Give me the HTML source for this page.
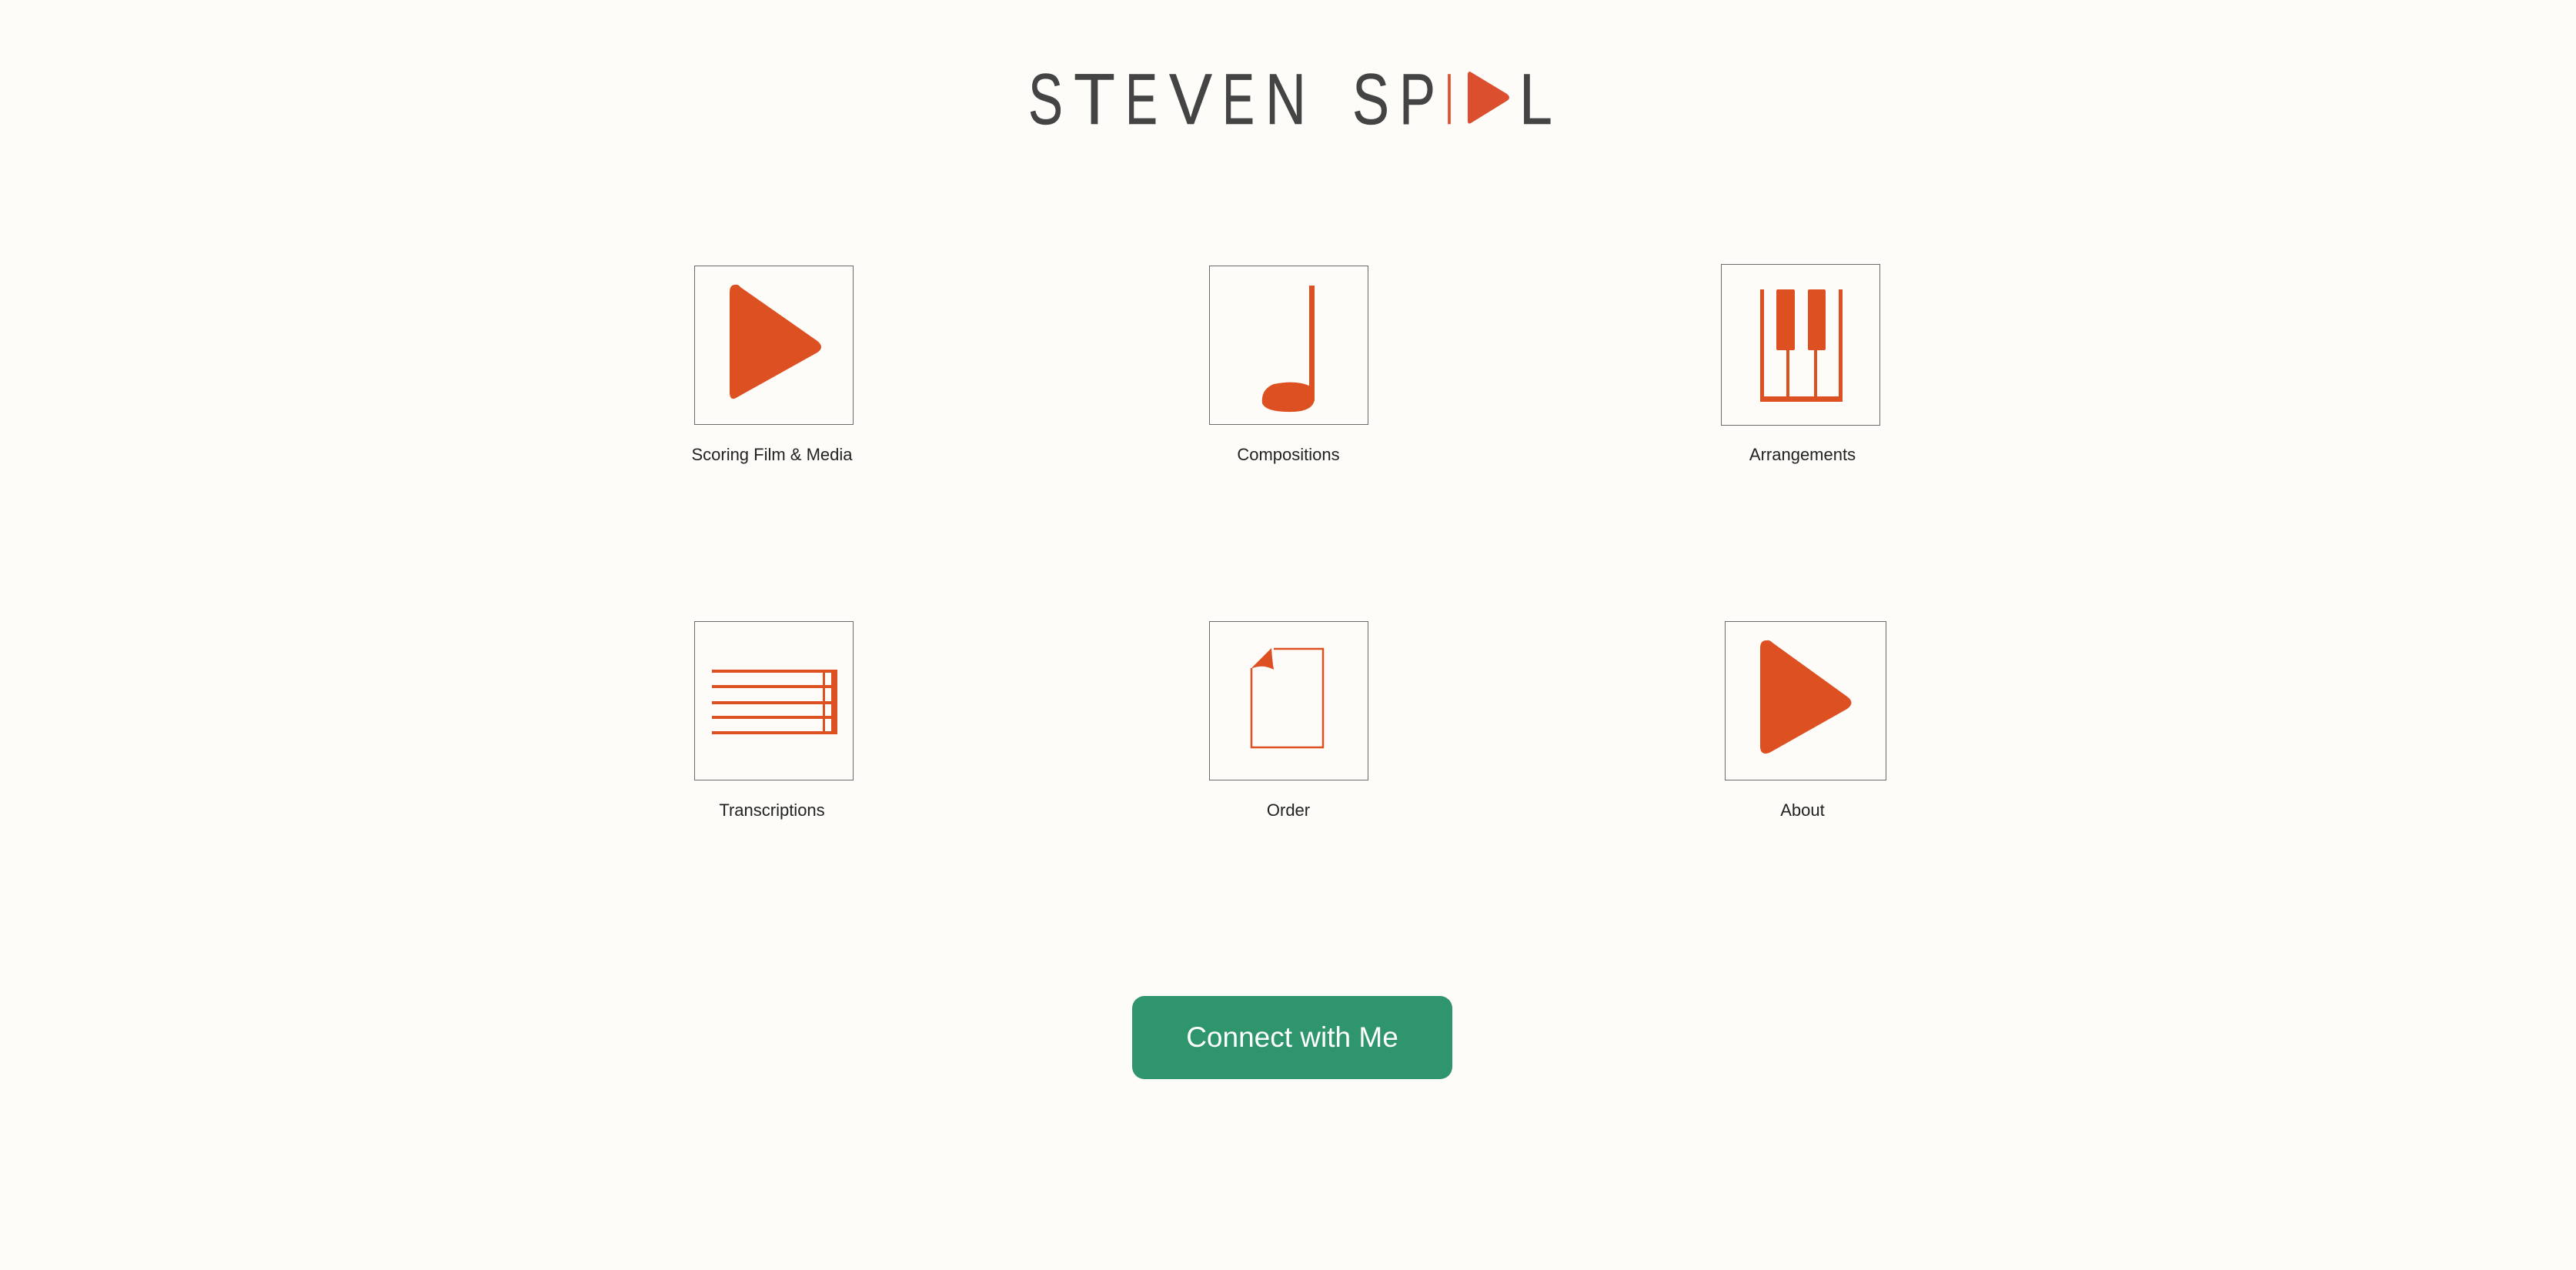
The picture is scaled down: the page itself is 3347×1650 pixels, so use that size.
<!DOCTYPE html>
<html><head><meta charset="utf-8"><style>
html,body{margin:0;padding:0;background:#fdfcf9;width:3347px;height:1650px;overflow:hidden;position:relative;font-family:"Liberation Sans",sans-serif}
.box{position:absolute;width:207px;height:207px;border:1.5px solid #6a6a6a;box-sizing:border-box}
.lbl{position:absolute;width:400px;text-align:center;font-size:22px;color:#222;line-height:30px}
svg{position:absolute;left:0;top:0}
.btn{position:absolute;left:1471px;top:1294px;width:416px;height:108px;background:#2e956c;border-radius:16px;color:#fff;font-size:37px;text-align:center;line-height:108px}
</style></head><body>
<div class="box" style="left:902px;top:345px"></div>
<div class="box" style="left:1571px;top:345px"></div>
<div class="box" style="left:2236px;top:343px;height:210px"></div>
<div class="box" style="left:902px;top:807px"></div>
<div class="box" style="left:1571px;top:807px"></div>
<div class="box" style="left:2241px;top:807px;width:210px"></div>
<div class="lbl" style="left:803px;top:576px">Scoring Film &amp; Media</div>
<div class="lbl" style="left:1474px;top:576px">Compositions</div>
<div class="lbl" style="left:2142px;top:576px">Arrangements</div>
<div class="lbl" style="left:803px;top:1038px">Transcriptions</div>
<div class="lbl" style="left:1474px;top:1038px">Order</div>
<div class="lbl" style="left:2142px;top:1038px">About</div>
<div class="btn">Connect with Me</div>
<svg width="3347" height="1650" viewBox="0 0 3347 1650">
<g font-family="Liberation Sans, sans-serif" font-size="94" fill="#444" stroke="#444" stroke-width="0.5">
<text x="1336" y="161" textLength="45" lengthAdjust="spacingAndGlyphs">S</text>
<text x="1395" y="161" textLength="54" lengthAdjust="spacingAndGlyphs">T</text>
<text x="1462" y="161" textLength="42" lengthAdjust="spacingAndGlyphs">E</text>
<text x="1519" y="161" textLength="56" lengthAdjust="spacingAndGlyphs">V</text>
<text x="1588" y="161" textLength="42" lengthAdjust="spacingAndGlyphs">E</text>
<text x="1644" y="161" textLength="53" lengthAdjust="spacingAndGlyphs">N</text>
<text x="1757" y="161" textLength="48" lengthAdjust="spacingAndGlyphs">S</text>
<text x="1818" y="161" textLength="47" lengthAdjust="spacingAndGlyphs">P</text>
<text x="1878" y="161" textLength="10" lengthAdjust="spacingAndGlyphs" fill="#db4f2f" stroke="#db4f2f">I</text>
<text x="1974" y="161" textLength="43" lengthAdjust="spacingAndGlyphs">L</text>
</g>
<path d="M1910 93 Q1907 93 1907 97 L1907 157 Q1907 162 1911 160 L1958 131 Q1964 127 1958 122 Z" fill="#db4f2f"/>
<g fill="#dd5021">
<path d="M955 370 Q948 370 948 380 L948 511 Q949 522 958 516 L1062 458 Q1072 451 1062 443 L962 373 Q959 369 955 370 Z"/>
<rect x="1701" y="371" width="7" height="150"/>
<path d="M1708 518 Q1707 534 1680 535 Q1645 536 1640 524 Q1638 506 1655 499 Q1685 493 1703 502 Z"/>
<rect x="2287" y="376" width="5" height="146"/>
<rect x="2389" y="376" width="5" height="146"/>
<rect x="2287" y="515" width="107" height="7"/>
<rect x="2321" y="440" width="4" height="80"/>
<rect x="2357" y="440" width="4" height="80"/>
<rect x="2308" y="376" width="24" height="79" rx="2"/>
<rect x="2349" y="376" width="23" height="79" rx="2"/>
<rect x="925" y="870" width="163" height="4"/>
<rect x="925" y="890" width="163" height="4"/>
<rect x="925" y="911" width="163" height="4"/>
<rect x="925" y="930" width="163" height="4"/>
<rect x="925" y="950" width="163" height="4"/>
<rect x="1069" y="870" width="3" height="84"/>
<rect x="1080" y="870" width="8" height="84"/>
<path d="M2295 832 Q2287 832 2287 842 L2287 971 Q2288 982 2299 978 L2400 921 Q2411 913 2400 905 L2303 835 Q2299 831 2295 832 Z"/>
</g>
<path d="M1655 843 L1719 843 L1719 971 L1626 971 L1626 868" fill="none" stroke="#dd5021" stroke-width="2.5"/>
<path d="M1625 869 L1652 842 Q1653 858 1655 870 Q1640 862 1625 869 Z" fill="#dd5021"/>
</svg>
</body></html>
